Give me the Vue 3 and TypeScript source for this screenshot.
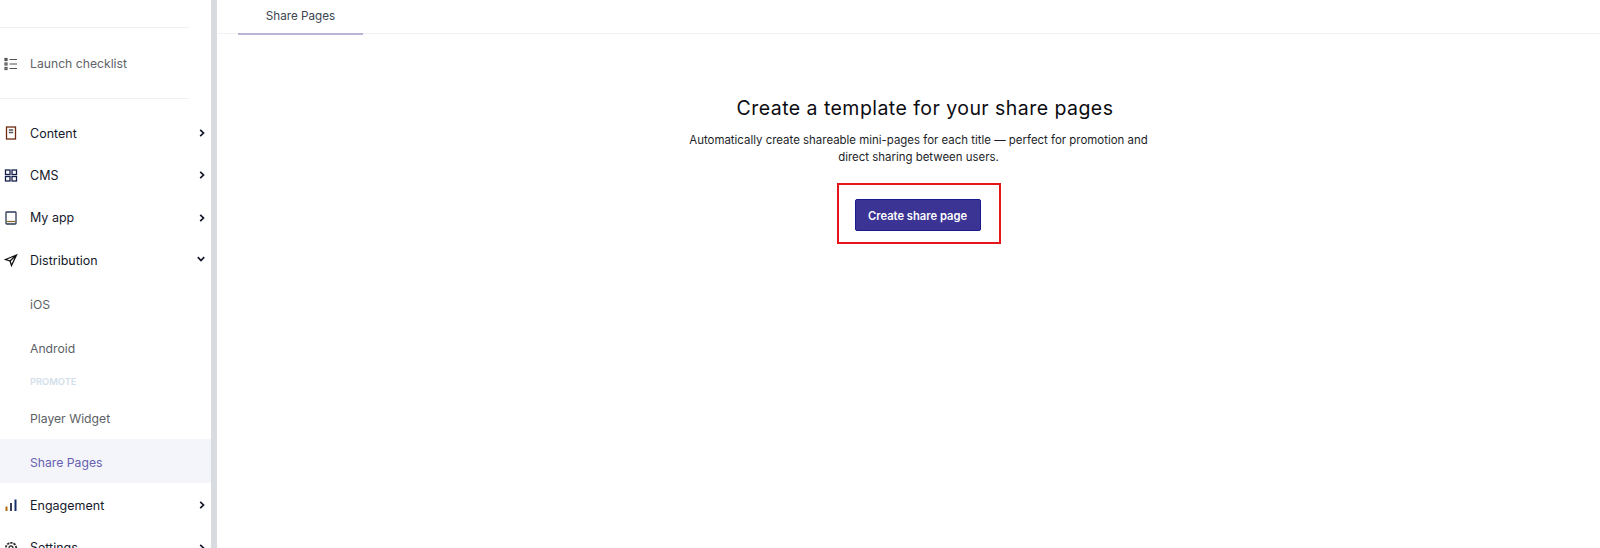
<script setup lang="ts">
interface NavItem {
  label: string
  icon: string
  arrow: 'right' | 'down'
}
const top: NavItem[] = [
  { label: 'Content', icon: 'content', arrow: 'right' },
  { label: 'CMS', icon: 'cms', arrow: 'right' },
  { label: 'My app', icon: 'app', arrow: 'right' },
  { label: 'Distribution', icon: 'dist', arrow: 'down' },
]
const bottom: NavItem[] = [
  { label: 'Engagement', icon: 'eng', arrow: 'right' },
  { label: 'Settings', icon: 'set', arrow: 'right' },
]
</script>

<template>
  <div class="page">
    <aside class="sidebar">
      <div class="nav">
        <hr class="rule first" />
        <div class="launch">
          <svg class="icon" viewBox="0 0 14 14" fill="none" stroke="#555" stroke-width="1.2">
            <path d="M5.5 2.5H13M5.5 7H13M5.5 11.5H13" />
            <rect x="1" y="1.5" width="2" height="2" fill="#555" />
            <rect x="1" y="6" width="2" height="2" />
            <rect x="1" y="10.5" width="2" height="2" />
          </svg>
          <span>Launch checklist</span>
        </div>
        <hr class="rule" />
        <div class="items">
          <div v-for="item in top" :key="item.label" class="item">
            <svg class="icon" viewBox="0 0 14 14" fill="none" stroke="#222" stroke-width="1.3">
              <template v-if="item.icon === 'content'">
                <rect x="2.5" y="1" width="9" height="12" stroke="#6e2a10" />
                <path d="M4.8 4H9.2M4.8 6.5H9.2" stroke="#555" />
              </template>
              <template v-else-if="item.icon === 'cms'">
                <rect x="1.5" y="2" width="4.5" height="4.5" stroke="#14204a" />
                <rect x="8" y="2" width="4.5" height="4.5" stroke="#14204a" />
                <rect x="1.5" y="8.5" width="4.5" height="4.5" stroke="#14204a" />
                <rect x="8" y="8.5" width="4.5" height="4.5" stroke="#14204a" />
              </template>
              <template v-else-if="item.icon === 'app'">
                <rect x="2" y="1" width="10" height="12" rx="0.8" stroke="#2c3a55" />
                <path d="M2.5 10.5H11.5" stroke="#8a6a30" />
              </template>
              <path v-else d="M12.5 2L1.5 6.5L6 8L7.5 12.5Z M12.5 2L6 8" stroke="#111" />
            </svg>
            <span>{{ item.label }}</span>
            <svg class="chev" :class="item.arrow" viewBox="0 0 8 8" fill="none" stroke="#14162a" stroke-width="1.7">
              <path d="M2.2 0.8L5.5 4L2.2 7.2" />
            </svg>
          </div>
          <div class="sub">iOS</div>
          <div class="sub">Android</div>
          <div class="section">PROMOTE</div>
          <div class="sub">Player Widget</div>
          <div class="sub active">Share Pages</div>
          <div v-for="item in bottom" :key="item.label" class="item">
            <svg class="icon" viewBox="0 0 14 14" fill="none" stroke-width="2">
              <template v-if="item.icon === 'eng'">
                <path d="M2.5 13V8.5" stroke="#b5650f" />
                <path d="M7 13V5" stroke="#3a3f58" />
                <path d="M11.5 13V1.5" stroke="#14306a" />
              </template>
              <template v-else>
                <circle cx="7" cy="7" r="5.2" stroke="#333" stroke-width="1.8" stroke-dasharray="2.4 0.9" />
                <circle cx="7" cy="7" r="2" stroke="#333" stroke-width="1.3" />
              </template>
            </svg>
            <span>{{ item.label }}</span>
            <svg class="chev right" viewBox="0 0 8 8" fill="none" stroke="#14162a" stroke-width="1.7">
              <path d="M2.2 0.8L5.5 4L2.2 7.2" />
            </svg>
          </div>
        </div>
      </div>
      <div class="strip"></div>
    </aside>
    <main class="main">
      <div class="tabs">
        <div class="tab">Share Pages</div>
      </div>
      <section class="empty">
        <h1>Create a template for your share pages</h1>
        <p>Automatically create shareable mini-pages for each title — perfect for promotion and direct sharing between users.</p>
        <div class="highlight">
          <button class="cta" type="button">Create share page</button>
        </div>
      </section>
    </main>
  </div>
</template>

<style>
html, body { margin: 0; background: #fff; overflow: hidden; }
</style>

<style scoped>
.page {
  display: flex;
  width: 1600px;
  height: 548px;
  overflow: hidden;
  font-family: Inter, "Liberation Sans", sans-serif;
  background: #fff;
}
.sidebar {
  display: flex;
  flex: 0 0 218px;
  height: 548px;
}
.nav { flex: 0 0 211px; width: 211px; }
.strip { flex: 0 0 6px; background: #d8dbe0; margin-right: 1px; }
.rule {
  margin: 0;
  border: 0;
  height: 1px;
  width: 189px;
  background: #eef0f3;
}
.first { margin-top: 27px; }
.launch {
  display: flex;
  align-items: center;
  box-sizing: border-box;
  height: 70px;
  padding-top: 1px;
  color: #5f6368;
  font-size: 12.2px;
}
.icon { width: 14px; height: 14px; margin-left: 4px; margin-right: 12px; flex: none; }
.items { padding-top: 13px; }
.item {
  position: relative;
  display: flex;
  align-items: center;
  height: 42.3px;
  font-size: 12.5px;
  color: #16192c;
}
.chev { position: absolute; left: 198px; top: 50%; width: 8px; height: 8px; margin-top: -4px; }
.chev.down { transform: rotate(90deg); left: 197px; margin-top: -5px; }
.sub {
  height: 44px;
  line-height: 47px;
  padding-left: 30px;
  font-size: 12.2px;
  color: #5c5f66;
}
.sub.active { color: #6660b0; background: #f4f5fa; margin-bottom: 1px; }
.section {
  height: 22px;
  line-height: 22px;
  padding: 2px 0 2px 30px;
  font-size: 9.3px;
  font-weight: 600;
  color: #d3e0ea;
}
.main { flex: 1; min-width: 0; }
.tabs {
  display: flex;
  height: 33px;
  padding-left: 20px;
  border-bottom: 1px solid #f0f1f4;
}
.tab {
  width: 125px;
  height: 33px;
  line-height: 33px;
  text-align: center;
  font-size: 11.7px;
  color: #3d4452;
  border-bottom: 2px solid #b9b5d8;
}
.empty {
  display: flex;
  flex-direction: column;
  align-items: center;
  text-align: center;
  padding-left: 19px;
}
h1 {
  margin: 62px 0 0;
  padding-left: 13px;
  font-size: 19.5px;
  line-height: 24px;
  font-weight: 400;
  letter-spacing: 0.45px;
  color: #0c0c12;
}
p {
  margin: 12px 0 0;
  width: 480px;
  font-size: 11.45px;
  line-height: 16.5px;
  color: #1c1e28;
}
.highlight {
  margin-top: 18px;
  padding: 14px 18px 11px 16px;
  border: 2px solid #e8141c;
}
.cta {
  display: block;
  width: 126px;
  height: 32px;
  border: 1px solid #1a1a8c;
  border-radius: 2px;
  background: #3b3494;
  color: #fff;
  font-family: inherit;
  font-size: 11.2px;
  font-weight: 600;
  padding: 1px 0 0;
}
</style>
